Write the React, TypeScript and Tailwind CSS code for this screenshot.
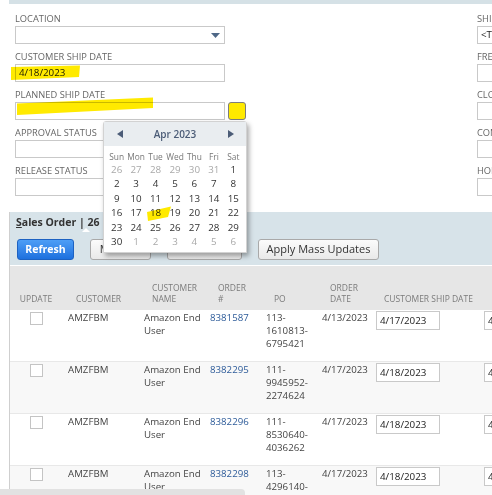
import React from "react"

const leftFields = [
  { label: "LOCATION", select: true },
  { label: "CUSTOMER SHIP DATE", value: "4/18/2023" },
  { label: "PLANNED SHIP DATE", calendar: true },
  { label: "APPROVAL STATUS" },
  { label: "RELEASE STATUS" },
]

const rightFields = [
  { label: "SHIP METHOD", value: "<Type then tab>" },
  { label: "FREIGHT TERMS" },
  { label: "CLOSED" },
  { label: "COMMENTS" },
  { label: "HOLD" },
]

const rows = [
  { order: "8381587", po: ["113-", "1610813-", "6795421"], date: "4/13/2023", ship: "4/17/2023" },
  { order: "8382295", po: ["111-", "9945952-", "2274624"], date: "4/17/2023", ship: "4/18/2023" },
  { order: "8382296", po: ["111-", "8530640-", "4036262"], date: "4/17/2023", ship: "4/18/2023" },
  { order: "8382298", po: ["113-", "4296140-", "0000000"], date: "4/17/2023", ship: "4/18/2023" },
]

// calendar cells: [day, dim]
const weeks: [number, boolean][][] = [
  [[26, true], [27, true], [28, true], [29, true], [30, true], [31, true], [1, false]],
  [[2, false], [3, false], [4, false], [5, false], [6, false], [7, false], [8, false]],
  [[9, false], [10, false], [11, false], [12, false], [13, false], [14, false], [15, false]],
  [[16, false], [17, false], [18, false], [19, false], [20, false], [21, false], [22, false]],
  [[23, false], [24, false], [25, false], [26, false], [27, false], [28, false], [29, false]],
  [[30, false], [1, true], [2, true], [3, true], [4, true], [5, true], [6, true]],
]

function Field({
  label,
  value,
  select,
  calendar,
}: {
  label: string
  value?: string
  select?: boolean
  calendar?: boolean
}) {
  return (
    <div className="mb-[6px]">
      <div className="h-[14px] text-[9.3px] leading-[14px] text-[#666] whitespace-nowrap">{label}</div>
      <div className="flex items-center gap-[3px]">
        <div className="relative flex h-[18px] w-[210px] shrink-0 items-center border border-[#c9c9c9] bg-white px-[3px] text-[9.8px] text-[#222] whitespace-nowrap">
          {value}
          {select && (
            <svg className="absolute right-[4px] top-[6px]" width="9" height="5" viewBox="0 0 9 5">
              <path d="M0 0h9L4.5 5z" fill="#4f6887" />
            </svg>
          )}
        </div>
        {calendar && (
          <div className="h-[18px] w-[18px] shrink-0 rounded-[3px] border border-[#7d7d7d] bg-[#ffea00]" />
        )}
      </div>
    </div>
  )
}

function Calendar() {
  return (
    <div className="absolute left-[103px] top-[121px] w-[144px] h-[132px] rounded-t-[3px] border border-[#d2d2d2] bg-white shadow-[2px_3px_5px_rgba(0,0,0,0.35)]">
      <div className="relative flex h-[24px] items-center justify-center bg-[#e9edf0]">
        <svg className="absolute left-[13px] top-[8px]" width="6" height="8" viewBox="0 0 6 8">
          <path d="M6 0v8L0 4z" fill="#4b5c77" />
        </svg>
        <span className="text-[10px] font-semibold text-[#4b5c77]">Apr 2023</span>
        <svg className="absolute left-[124px] top-[8px]" width="6" height="8" viewBox="0 0 6 8">
          <path d="M0 0v8l6-4z" fill="#4b5c77" />
        </svg>
      </div>
      <div className="px-[3px] pt-[4px]">
        <div className="grid h-[13px] grid-cols-7 text-center text-[8.4px] leading-[13px] text-[#777]">
          {["Sun", "Mon", "Tue", "Wed", "Thu", "Fri", "Sat"].map((d) => (
            <div key={d}>{d}</div>
          ))}
        </div>
        {weeks.map((w, i) => (
          <div key={i} className="grid h-[14.4px] grid-cols-7 text-center text-[9.8px] leading-[14.4px]">
            {w.map(([d, dim], j) => (
              <div key={j} className={dim ? "text-[#a9a9a9]" : "text-[#333]"}>
                {d}
              </div>
            ))}
          </div>
        ))}
      </div>
    </div>
  )
}

export default function App() {
  return (
    <div className="relative h-[495px] w-[492px] overflow-hidden bg-white font-['Open_Sans',sans-serif]">
      <div className="ml-[9px] h-[4px] bg-[#d5e1e6]" />

      {/* header fields */}
      <div className="flex pt-[8px] pl-[15px]">
        <div className="w-[210px] shrink-0">
          {leftFields.map((f) => (
            <Field key={f.label} {...f} />
          ))}
        </div>
        <div className="ml-[252px] w-[120px] shrink-0">
          {rightFields.map((f) => (
            <div key={f.label} className="mb-[6px]">
              <div className="h-[14px] text-[9.3px] leading-[14px] text-[#666] whitespace-nowrap">{f.label}</div>
              <div className="flex h-[18px] w-[120px] items-center border border-[#c9c9c9] px-[3px] text-[9.8px] text-[#222] whitespace-nowrap">
                {f.value}
              </div>
            </div>
          ))}
        </div>
      </div>

      {/* sublist */}
      <div className="mt-[10px] ml-[9px] border-l border-[#cfcfcf]">
        <div className="relative bg-[#d7e3e9] pt-[2px] pb-[5px] pl-[6px]">
          <div className="h-[16px] text-[10.5px] font-bold leading-[16px] text-[#333]">
            <span className="underline">S</span>ales Order | 26
          </div>
          <div className="absolute left-[72px] top-[16px] h-0 w-0 border-x-[4px] border-b-[4px] border-x-transparent border-b-white" />
          <div className="mt-[9px] flex gap-[16px] pl-[1px]">
            <button className="h-[21px] w-[57px] rounded-[3px] border border-[#1d62c2] bg-gradient-to-b from-[#4d9ef6] to-[#1d70de] text-[10.5px] font-bold text-white">
              Refresh
            </button>
            <button className="h-[21px] w-[61px] rounded-[3px] border border-[#a9a9a9] bg-gradient-to-b from-[#fbfbfb] to-[#e9e9e9] text-[11px] text-[#333]">
              Mark All
            </button>
            <button className="h-[21px] w-[75px] rounded-[3px] border border-[#a9a9a9] bg-gradient-to-b from-[#fbfbfb] to-[#e9e9e9] text-[11px] text-[#333]">
              Unmark All
            </button>
            <button className="h-[21px] w-[121px] rounded-[3px] border border-[#a9a9a9] bg-gradient-to-b from-[#fbfbfb] to-[#e9e9e9] text-[11px] text-[#333]">
              Apply Mass Updates
            </button>
          </div>
        </div>

        <div className="h-px bg-white" />

        {/* table header */}
        <div className="grid h-[44px] grid-cols-[52px_76px_66px_56px_56px_54px_108px_1fr] items-end bg-[#e6e6e6] pb-[6px] text-[8.5px] leading-[11px] text-[#7b7b7b] whitespace-nowrap">
          <div className="text-center">UPDATE</div>
          <div className="pl-[14px]">CUSTOMER</div>
          <div className="pl-[14px]">
            CUSTOMER
            <br />
            NAME
          </div>
          <div className="pl-[14px]">
            ORDER
            <br />#
          </div>
          <div className="pl-[14px]">PO</div>
          <div className="pl-[14px]">
            ORDER
            <br />
            DATE
          </div>
          <div className="pl-[14px]">CUSTOMER SHIP DATE</div>
          <div />
        </div>

        {/* rows */}
        {rows.map((r, i) => (
          <div
            key={r.order}
            className={`grid h-[52px] grid-cols-[52px_76px_66px_56px_56px_54px_108px_1fr] border-b border-[#e8e8e8] pt-[1px] text-[9.7px] leading-[13px] text-[#444] whitespace-nowrap ${
              i % 2 ? "bg-[#f8f8f8]" : "bg-white"
            }`}
          >
            <div className="flex justify-center pt-[1px]">
              <div className="h-[13px] w-[13px] border border-[#c4c4c4] bg-white" />
            </div>
            <div className="pl-[6px]">AMZFBM</div>
            <div className="pl-[6px]">
              Amazon End
              <br />
              User
            </div>
            <div className="pl-[6px] text-[#2d5b99]">{r.order}</div>
            <div className="pl-[6px]">
              {r.po.map((p) => (
                <div key={p}>{p}</div>
              ))}
            </div>
            <div className="pl-[6px]">{r.date}</div>
            <div className="pl-[6px]">
              <div className="flex h-[19px] w-[64px] items-center border border-[#c9c9c9] bg-white pl-[3px] text-[9.8px] text-[#222]">
                {r.ship}
              </div>
            </div>
            <div className="pl-[6px]">
              <div className="flex h-[19px] w-[64px] items-center border border-[#c9c9c9] bg-white pl-[3px] text-[9.8px] text-[#222]">
                {r.ship}
              </div>
            </div>
          </div>
        ))}
      </div>

      <Calendar />

      {/* horizontal scrollbar */}
      <div className="absolute bottom-0 left-0 h-[6px] w-[245px] rounded-tr-[4px] bg-[#e2e2e2]" />

      {/* marker highlights */}
      <svg className="pointer-events-none absolute left-0 top-0 mix-blend-multiply" width="492" height="495">
        <path d="M11 67 L80 65.5 L79 77 L11 80 Z" fill="#ffea00" />
        <path d="M17 103.5 L153 97.5 L153 108 L17 115 Z" fill="#ffea00" />
        <path d="M147 212 L171 206.5 L168 217 L148 221 Z" fill="#ffea00" />
      </svg>
    </div>
  )
}
